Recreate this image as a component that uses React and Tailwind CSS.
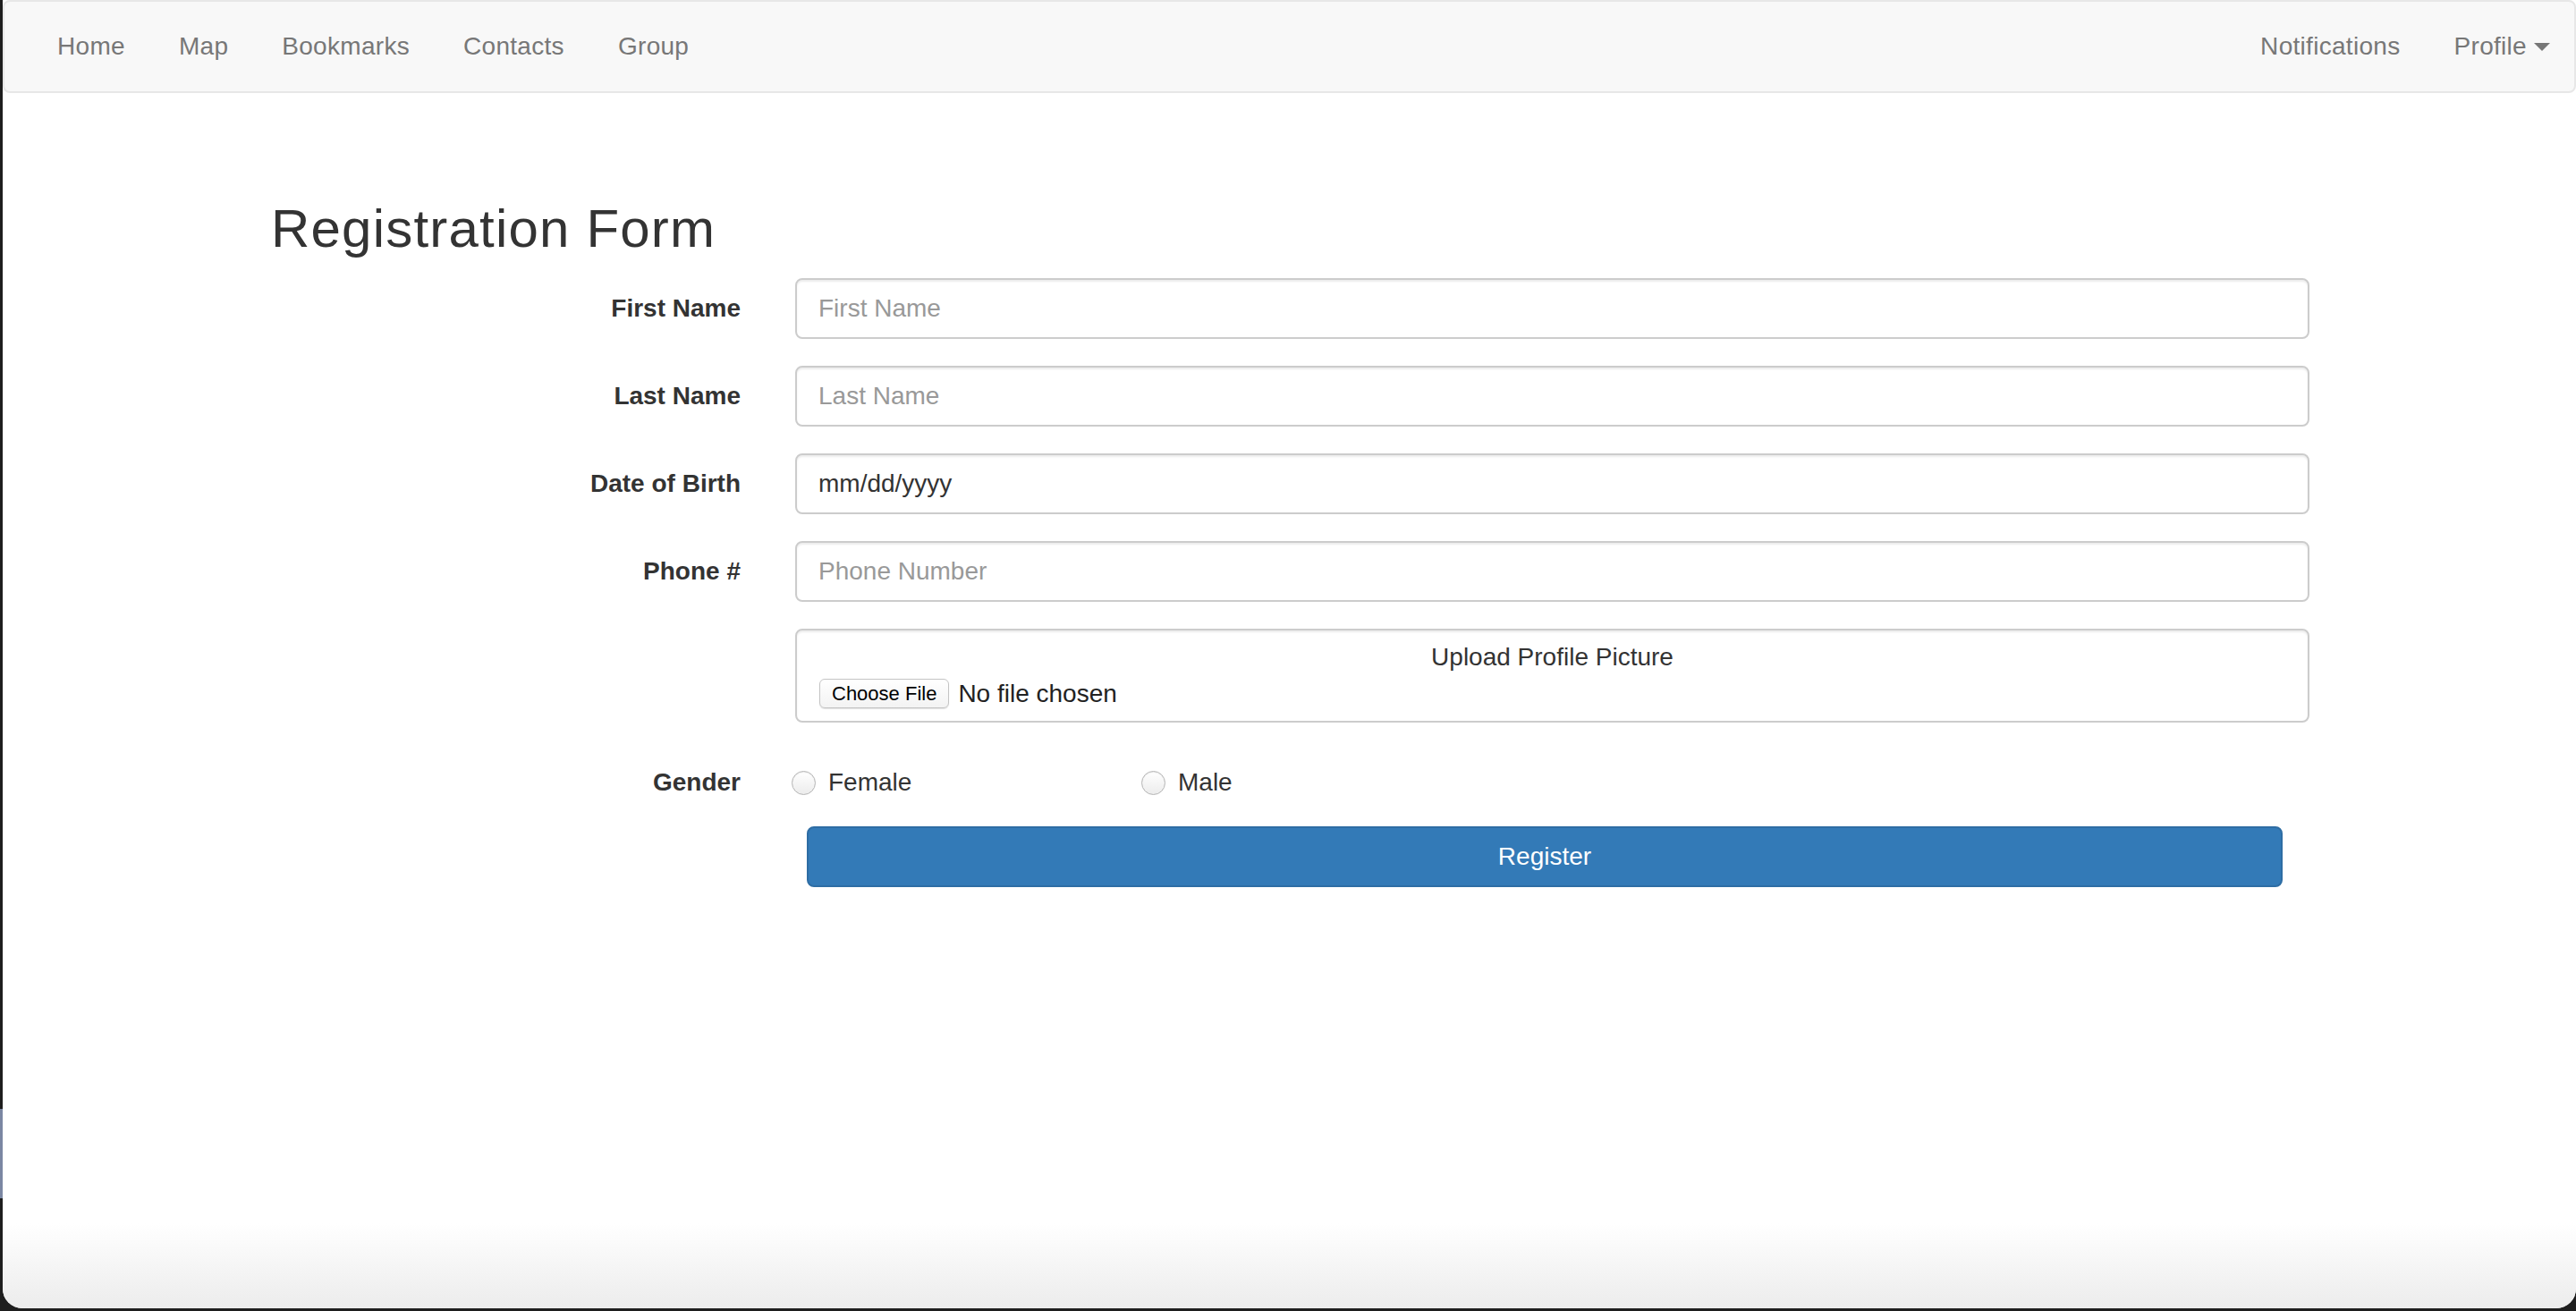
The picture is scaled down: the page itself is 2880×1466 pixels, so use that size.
import { useState } from "react";

const navLeft = ["Home", "Map", "Bookmarks", "Contacts", "Group"];

const fields = [
  { label: "First Name", placeholder: "First Name" },
  { label: "Last Name", placeholder: "Last Name" },
  { label: "Date of Birth", value: "mm/dd/yyyy" },
  { label: "Phone #", placeholder: "Phone Number" },
];

function Radio({ label, checked, onClick }) {
  return (
    <label onClick={onClick} className="flex items-center gap-[14px] cursor-pointer">
      <span className="w-[27px] h-[27px] rounded-full border border-[#b4b4b4] bg-gradient-to-b from-white to-[#ececec] shadow-[inset_0_1px_1px_rgba(0,0,0,0.08)] flex items-center justify-center">
        {checked && <span className="w-[11px] h-[11px] rounded-full bg-[#333]" />}
      </span>
      <span className="text-[28px] leading-[40px] text-[#333]">{label}</span>
    </label>
  );
}

export default function App() {
  const [gender, setGender] = useState(null);

  return (
    <div className="flex w-full h-[1466px] bg-[#1e1e1e] font-['Liberation_Sans',Arial,sans-serif]">
      {/* window edge */}
      <div className="w-[3px] flex flex-col shrink-0">
        <div className="h-[1240px] bg-[#1e1e1e]" />
        <div className="h-[100px] bg-[#7b87a3]" />
        <div className="flex-1 bg-[#1e1e1e]" />
      </div>

      <div className="flex-1 flex flex-col bg-white rounded-b-[22px] mb-[3px] overflow-hidden">
        {/* Navbar */}
        <nav className="h-[104px] shrink-0 bg-[#f8f8f8] border-2 border-[#e7e7e7] rounded-[8px] flex items-center justify-between pl-[29px]">
          <ul className="flex items-center">
            {navLeft.map((item) => (
              <li key={item} className="px-[30px] text-[28px] leading-[40px] tracking-[0.3px] text-[#777]">
                {item}
              </li>
            ))}
          </ul>
          <ul className="flex items-center">
            <li className="px-[30px] text-[28px] leading-[40px] tracking-[0.3px] text-[#777]">Notifications</li>
            <li className="pl-[30px] pr-[27px] text-[28px] leading-[40px] tracking-[0.3px] text-[#777] flex items-center gap-[8px]">
              Profile
              <span className="w-0 h-0 border-x-[9px] border-x-transparent border-t-[9px] border-t-[#777]" />
            </li>
          </ul>
        </nav>

        {/* Content */}
        <main className="pl-[297px] pr-[298px] pt-[119px]">
          <h2 className="pl-[3px] text-[60px] leading-[66px] tracking-[1.2px] text-[#333]">Registration Form</h2>

          <form className="mt-[22px] flex flex-col" onSubmit={(e) => e.preventDefault()}>
            {fields.map((f) => (
              <div key={f.label} className="flex items-center mb-[30px]">
                <label className="w-[528px] shrink-0 text-right text-[28px] font-bold text-[#333]">
                  {f.label}
                </label>
                <input
                  type="text"
                  placeholder={f.placeholder}
                  defaultValue={f.value}
                  className="ml-[61px] flex-1 h-[68px] px-[24px] border-2 border-[#ccc] rounded-[8px] text-[28px] text-[#333] placeholder:text-[#999] shadow-[inset_0_2px_2px_rgba(0,0,0,0.075)] outline-none"
                />
              </div>
            ))}

            {/* Upload */}
            <div className="flex">
              <div className="w-[528px] shrink-0" />
              <div className="ml-[61px] flex-1 h-[105px] border-2 border-[#ccc] rounded-[8px] pt-[10px] px-[25px] shadow-[inset_0_2px_2px_rgba(0,0,0,0.075)]">
                <div className="text-center text-[28px] leading-[40px] text-[#333]">Upload Profile Picture</div>
                <div className="flex items-center h-[41px] gap-[10px]">
                  <span className="h-[33px] px-[13px] flex items-center border border-[#c4c4c4] rounded-[6px] bg-gradient-to-b from-white to-[#f3f3f3] shadow-[0_1px_1px_rgba(0,0,0,0.12)] text-[22px] text-black">
                    Choose File
                  </span>
                  <span className="text-[28px] text-[#222]">No file chosen</span>
                </div>
              </div>
            </div>

            {/* Gender */}
            <div className="flex items-center mt-[47px] h-[40px]">
              <span className="w-[528px] shrink-0 text-right text-[28px] font-bold text-[#333]">Gender</span>
              <div className="ml-[57px] flex">
                <div className="w-[391px]">
                  <Radio label="Female" checked={gender === "f"} onClick={() => setGender("f")} />
                </div>
                <Radio label="Male" checked={gender === "m"} onClick={() => setGender("m")} />
              </div>
            </div>

            {/* Submit */}
            <div className="flex mt-[29px]">
              <div className="w-[528px] shrink-0" />
              <button
                type="submit"
                className="ml-[74px] mr-[30px] flex-1 h-[68px] bg-[#337ab7] border-2 border-[#2e6da4] rounded-[8px] text-white text-[28px]"
              >
                Register
              </button>
            </div>
          </form>
        </main>

        <div className="flex-1" />
        <div className="h-[95px] shrink-0 bg-gradient-to-b from-white to-[#ececec]" />
      </div>
    </div>
  );
}
